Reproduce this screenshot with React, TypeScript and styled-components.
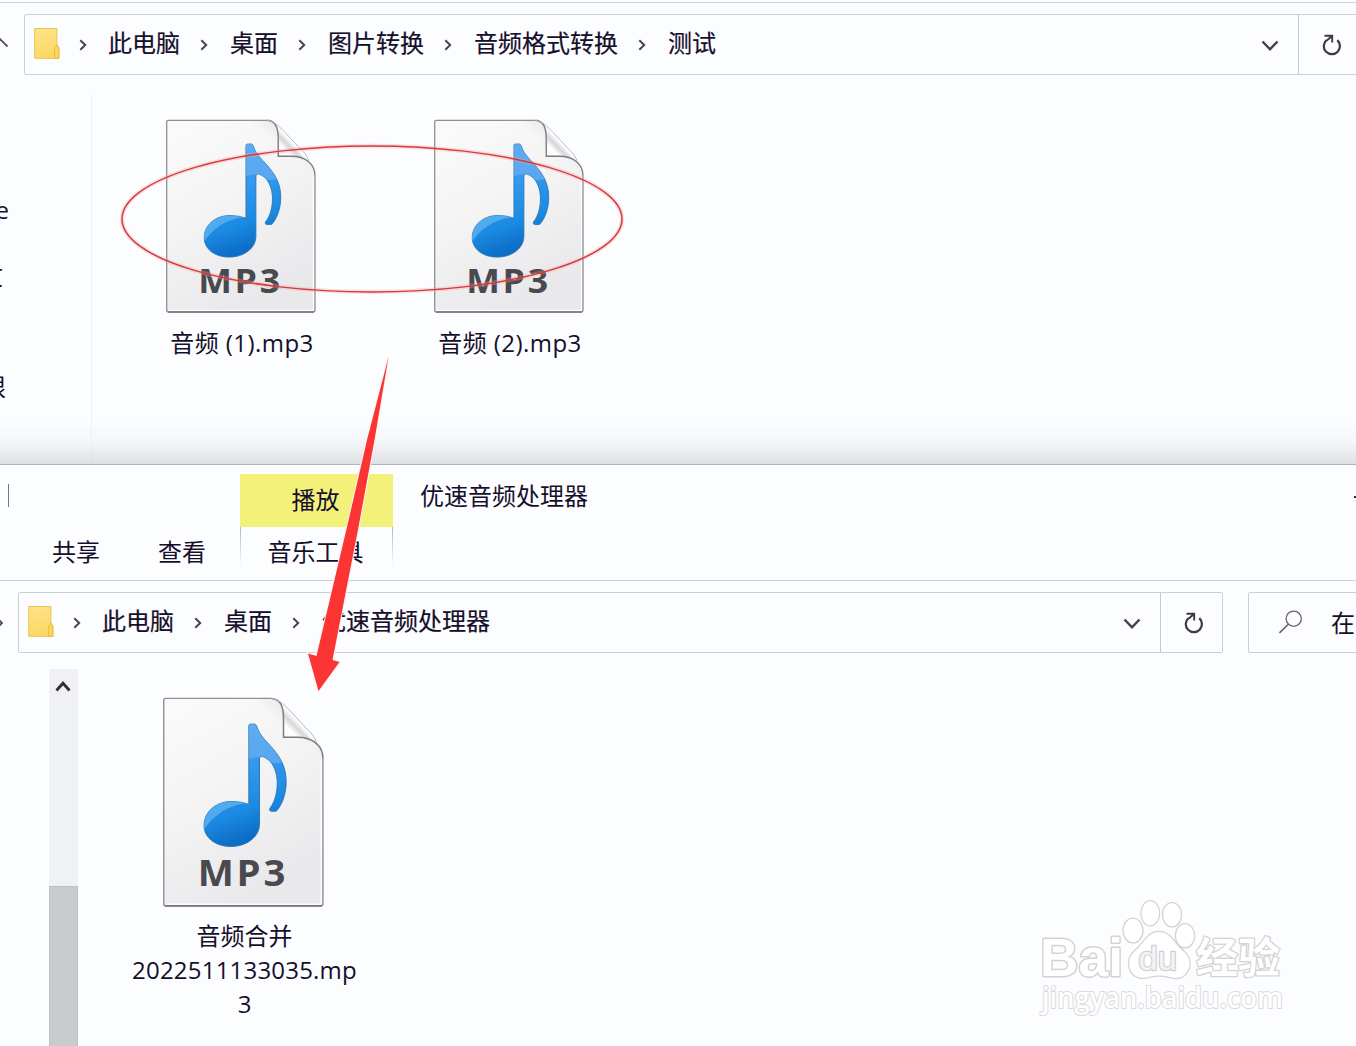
import React from "react";
import styled, { createGlobalStyle } from "styled-components";

const Global = createGlobalStyle`
  * { box-sizing: border-box; }
  html, body { margin: 0; background: #fcfdff; }
  body {
    font-family: "Open Sans", "Noto Sans CJK SC", sans-serif;
    color: #160f2b;
    overflow: hidden;
  }
  svg { display: block; flex: none; }
`;

const Screen = styled.div`
  position: relative;
  width: 1356px;
  height: 1046px;
  overflow: hidden;
  background: #fcfdff;
`;

const UpperWindow = styled.section`
  height: 464px;
  display: flex;
  flex-direction: column;
  background: linear-gradient(#fcfdff 0, #fcfdff 420px, #f5f6f9 442px, #dfe0e4 464px);
`;

const RibbonEdge = styled.div`
  height: 14px;
  flex: none;
  padding-top: 2px;
  &::after { content: ""; display: block; height: 1px; background: #cbd3dc; }
`;

const NavRow = styled.div`
  display: flex;
  height: 61px;
  flex: none;
`;

const NavGutter = styled.div<{ $w: number }>`
  width: ${(p) => p.$w}px;
  flex: none;
  display: flex;
  align-items: center;
`;

const AddressBar = styled.div<{ $w: number }>`
  width: ${(p) => p.$w}px;
  flex: none;
  display: flex;
  border: 1px solid #c9d0d9;
  border-radius: 2px;
`;

const Crumbs = styled.div`
  flex: 1;
  display: flex;
  align-items: center;
  padding-left: 9px;
`;

const Crumb = styled.span`
  font-size: 24px;
  line-height: 34px;
  white-space: nowrap;
  color: #160f2b;
  -webkit-text-stroke: 0.2px #160f2b;
  margin-top: -3px;
`;

const CrumbGap = styled.span<{ $w?: number }>`
  width: ${(p) => p.$w ?? 50}px;
  padding-right: 2px;
  display: flex;
  justify-content: center;
`;

const DropButton = styled.div<{ $w: number }>`
  width: ${(p) => p.$w}px;
  padding-top: 3px;
  display: flex;
  align-items: center;
  justify-content: center;
`;

const RefreshButton = styled.div`
  width: 62px;
  flex: none;
  display: flex;
  align-items: center;
  justify-content: center;
  padding-left: 4px;
  border-left: 1px solid #c3c9d3;
`;

const SearchBox = styled.div`
  width: 150px;
  flex: none;
  margin-left: 25px;
  border: 1px solid #c9d0d9;
  border-radius: 2px;
  display: flex;
  align-items: center;
  padding-left: 30px;
  gap: 28px;
  font-size: 24px;
  line-height: 34px;
`;

const UpperBody = styled.div`
  flex: 1;
  display: flex;
`;

const TreePane = styled.div`
  width: 92px;
  flex: none;
  margin-top: 20px;
  padding-top: 98px;
  border-right: 1px solid rgba(205, 212, 225, 0.25);
`;

const TreeItem = styled.div<{ $w: number; $h: number }>`
  width: ${(p) => p.$w}px;
  height: ${(p) => p.$h}px;
  overflow: hidden;
  display: flex;
  justify-content: flex-end;
  font-size: 24px;
  line-height: 34px;
  white-space: nowrap;
`;

const FileGrid = styled.div<{ $top: number; $left: number }>`
  display: flex;
  align-items: flex-start;
  padding: ${(p) => p.$top}px 0 0 ${(p) => p.$left}px;
`;

const FileItem = styled.figure<{ $w: number }>`
  margin: 0;
  width: ${(p) => p.$w}px;
  display: flex;
  flex-direction: column;
  align-items: center;
`;

const FileName = styled.figcaption<{ $gap: number }>`
  margin-top: ${(p) => p.$gap}px;
  padding-left: 2px;
  font-size: 24px;
  line-height: 34px;
  text-align: center;
  white-space: nowrap;
`;

const NameLine = styled.span<{ $spacing?: number }>`
  display: block;
  letter-spacing: ${(p) => p.$spacing ?? 0}px;
`;

const LowerWindow = styled.section`
  height: 582px;
  display: flex;
  flex-direction: column;
  border-top: 1px solid #b4b5ba;
`;

const Header = styled.div`
  height: 116px;
  flex: none;
  display: flex;
  border-bottom: 1px solid #cbd1da;
  font-size: 24px;
  line-height: 34px;
`;

const MenuSide = styled.div`
  width: 240px;
  display: flex;
  flex-direction: column;
  justify-content: space-between;
  padding: 19px 0 11px 8px;
`;

const Caret = styled.div`
  width: 1px;
  height: 23px;
  background: #77767f;
`;

const MenuTabs = styled.div`
  display: flex;
  gap: 58px;
  padding-left: 44px;
`;

const ContextTab = styled.div`
  width: 153px;
  padding-top: 9px;
  text-align: center;
`;

const ContextTitle = styled.div`
  height: 53px;
  background: #f4f17b;
  padding: 9px 2px 0 0;
`;

const ContextLabel = styled.div`
  height: 39px;
  padding: 8px 2px 0 0;
  background:
    linear-gradient(#b5b6bd, #fcfdff) left / 1px 100% no-repeat,
    linear-gradient(#b5b6bd, #fcfdff) right / 1px 100% no-repeat;
`;

const WindowTitle = styled.div`
  flex: 1;
  padding: 14px 0 0 27px;
`;

const MinimizeEdge = styled.div`
  width: 2px;
  height: 2px;
  margin-top: 31px;
  background: #2b2635;
`;

const LowerNav = styled(NavRow)`
  margin-top: 11px;
`;

const LowerBody = styled.div`
  flex: 1;
  display: flex;
  padding: 16px 0 0 49px;
`;

const ScrollTrack = styled.div`
  width: 29px;
  flex: none;
  display: flex;
  flex-direction: column;
  background: #eff1f4;
  padding-top: 11px;
`;

const ScrollUp = styled.div`
  padding-left: 6px;
`;

const ScrollThumb = styled.div`
  width: 29px;
  flex: 1;
  margin-top: 194px;
  background: #cacbcf;
  border: solid #bebfc4;
  border-width: 1px 1px 0;
`;

const Overlay = styled.svg`
  position: absolute;
  left: 0;
  top: 0;
  pointer-events: none;
`;

function Folder() {
  return (
    <svg width="26" height="36" viewBox="0 0 26 36">
      <defs>
        <linearGradient id="folder" x1="0" y1="0" x2="0.3" y2="1">
          <stop offset="0" stopColor="#ffe38d" />
          <stop offset="1" stopColor="#fbd864" />
        </linearGradient>
      </defs>
      <path d="M.7 1.500h22.200V18l2 3v10.300H.7z" fill="url(#folder)" stroke="#e9c552" />
      <path d="M23 18c-1.600 2.500-2.600 4-2.600 6.500V31.300h4.500V21z" fill="#f9d660" stroke="#e5b93b" strokeWidth="0.900" />
    </svg>
  );
}

function Chevron() {
  return (
    <svg width="8" height="12" viewBox="0 0 8 12">
      <path d="M1.300 1.200 6.200 6 1.300 10.800" fill="none" stroke="#4b4353" strokeWidth="2" />
    </svg>
  );
}

function DownChevron() {
  return (
    <svg width="18" height="12" viewBox="0 0 18 12">
      <path d="M1.500 1.500 9 9.300l7.500-7.800" fill="none" stroke="#463f4c" strokeWidth="2.500" />
    </svg>
  );
}

function Refresh() {
  return (
    <svg width="20" height="22" viewBox="0 0 20 22">
      <path d="M4.300 6.200A8.100 8.100 0 1 0 15.300 6.100" fill="none" stroke="#413748" strokeWidth="2.200" />
      <path d="M2.500 1.800h7.700V8.600M10 2 4.200 7" fill="none" stroke="#413748" strokeWidth="1.900" />
    </svg>
  );
}

function Magnifier() {
  return (
    <svg width="24" height="26" viewBox="0 0 24 26">
      <g fill="none" stroke="#69616f">
        <circle cx="14.700" cy="8.700" r="7.600" strokeWidth="1.300" />
        <path d="M9.300 14.200.5 23" strokeWidth="1.600" />
      </g>
    </svg>
  );
}

function Mp3Icon({ id, w, h }: { id: string; w: number; h: number }) {
  const note =
    "M80.500 25.500Q80.500 24 82 24H86Q87.500 24 88.500 27.500C92.500 41 115.500 50 115.500 77C115.500 88 112 97.500 107 103.500Q106.500 104.300 105.500 104.300H102Q99 104.300 100.300 101.500C110 90 111 59 93 53.800Q90.500 53.300 90.500 56V116C90.500 128 78.500 136.800 63.500 136.800C49 136.800 38.500 128.500 38.500 117.500C38.500 105 49.500 95.300 64.500 95.300Q73.500 95.300 80.500 98z";
  return (
    <svg width={w} height={h} viewBox="0 -0.6 151 193.600" preserveAspectRatio="none">
      <defs>
        <linearGradient id={`${id}-paper`} x1="0" y1="0" x2="0.450" y2="1">
          <stop offset="0" stopColor="#fbfbfc" />
          <stop offset="0.500" stopColor="#f4f4f5" />
          <stop offset="1" stopColor="#e9e9eb" />
        </linearGradient>
        <linearGradient id={`${id}-note`} x1="0" y1="0" x2="0.250" y2="1">
          <stop offset="0" stopColor="#4ea2ed" />
          <stop offset="0.450" stopColor="#3399ee" />
          <stop offset="0.780" stopColor="#1b8ae2" />
          <stop offset="1" stopColor="#0c6dc6" />
        </linearGradient>
        <linearGradient id={`${id}-shade`} x1="1" y1="0" x2="0.300" y2="0.800">
          <stop offset="0.200" stopColor="#a8a8ab" stopOpacity="0.750" />
          <stop offset="0.620" stopColor="#d5d5d8" stopOpacity="0" />
        </linearGradient>
        <linearGradient id={`${id}-curl`} x1="0" y1="1" x2="1" y2="0">
          <stop offset="0" stopColor="#ededee" />
          <stop offset="0.340" stopColor="#ffffff" />
          <stop offset="0.450" stopColor="#d6d6d9" />
          <stop offset="0.540" stopColor="#fafafa" />
        </linearGradient>
        <clipPath id={`${id}-clip`}><path d={note} /></clipPath>
      </defs>
      <path
        d="M2.500.7H102C111 1.500 113 9 113 20V36.500H129C141 36.500 150 43 150 56V190Q150 192 148 192H2.500Q.7 192 .7 190V2.500Q.7.700 2.500.7z"
        fill={`url(#${id}-paper)`}
      />
      <path d="M80 1H102C111 1.500 113 9 113 20V36.500H129C141 36.500 149 43 149.500 56V64L88 46z" fill={`url(#${id}-shade)`} opacity="0.550" />
      <path
        d="M102 .7H2.500Q.7.700.7 2.500V190Q.7 192 2.500 192H148Q150 192 150 190V56"
        fill="none" stroke="#8e8f94" strokeWidth="1.300"
      />
      <path d="M2.200 190.300H148.400V58" fill="none" stroke="#fff" strokeWidth="1.200" />
      <path d="M2 192H149" stroke="#77787d" strokeWidth="1.500" />
      <path d="M102 .7C111 3 120 15 136 34L139 38Q131 36 113 36.500V20C113 9 111 2 102 .7z" fill={`url(#${id}-curl)`} />
      <path d="M102 .7C111 1.500 113 9 113 20V36.500H126C140 36.500 150 44 150 56" fill="none" stroke="#7b7b80" strokeWidth="1.400" />
      <path d="M102 .7C110 2 115 8 121 14L136 30C140 33 142 37 144 41" fill="none" stroke="#b2b3b8" strokeWidth="0.900" />
      <g transform="translate(0 0.400)">
        <path d={note} fill={`url(#${id}-note)`} stroke="#2c75b6" strokeWidth="0.900" />
        <g clipPath={`url(#${id}-clip)`}>
          <path d="M78 20H118V57Q101 64 89 54Q84 55 78 57z" fill="#72b3f4" opacity="0.600" />
          <path d="M36 126C43 111 60 98 80 97V90H36z" fill="#70c0f8" opacity="0.600" />
        </g>
      </g>
      <text x="32.500" y="173.500" textLength="85" lengthAdjust="spacingAndGlyphs" letterSpacing="2.500" fontFamily="Open Sans, sans-serif" fontWeight="700" fontSize="33.500" fill="#4a494f">
        MP3
      </text>
    </svg>
  );
}

function Trail({ items }: { items: string[] }) {
  return (
    <Crumbs>
      <Folder />
      <CrumbGap $w={48}><Chevron /></CrumbGap>
      {items.map((name, i) => (
        <React.Fragment key={name}>
          {i > 0 && <CrumbGap><Chevron /></CrumbGap>}
          <Crumb>{name}</Crumb>
        </React.Fragment>
      ))}
    </Crumbs>
  );
}

function Annotations() {
  return (
    <Overlay width="1356" height="1046" viewBox="0 0 1356 1046">
      <ellipse cx="372" cy="219" rx="250" ry="73" fill="none" stroke="#ff9d9d" strokeOpacity="0.300" strokeWidth="4.500" />
      <ellipse cx="372" cy="219" rx="250" ry="73" fill="none" stroke="#d23c3f" strokeWidth="1.500" />
      <path
        d="M388.500 357 374.500 440 358.500 527 332.500 660 339.500 662 318.500 691 308 653.500 316.500 656 347 527 367 440z"
        fill="#fb3434" stroke="#fff3f3" strokeWidth="2" paintOrder="stroke"
      />
    </Overlay>
  );
}

function Watermark() {
  return (
    <Overlay width="1356" height="1046" viewBox="0 0 1356 1046">
      <g fill="#fff" stroke="#d3d3d6" strokeWidth="2.600" paintOrder="stroke" strokeLinejoin="round">
        <ellipse cx="1133" cy="930.500" rx="9.300" ry="11.800" />
        <ellipse cx="1150.300" cy="913.300" rx="8.700" ry="12" />
        <ellipse cx="1172" cy="914.700" rx="9" ry="11.500" />
        <ellipse cx="1185" cy="935.700" rx="9" ry="11.500" />
        <path d="M1159 932C1170 932 1174 943 1182 950C1190 957 1191 963 1188 970C1184 979 1176 979 1168 976.500Q1159 974.500 1150 976.500C1142 979 1134 978 1130.500 970C1127 961 1130 956 1137 949C1145 942 1148 932 1159 932z" />
        <g fontWeight="700">
          <text x="1040" y="975.500" fontSize="54" textLength="83" lengthAdjust="spacingAndGlyphs" fontFamily="Liberation Sans, sans-serif" strokeWidth="3">Bai</text>
          <text x="1138.500" y="969.500" fontSize="33" textLength="38.500" lengthAdjust="spacingAndGlyphs" fontFamily="Liberation Sans, sans-serif" fontWeight="400" fill="#f4f4f6" stroke="#cfcfd3" strokeWidth="2.400">du</text>
          <text x="1196" y="973" fontSize="42" fontFamily="Noto Sans CJK SC, sans-serif">经验</text>
        </g>
        <text x="1042" y="1008" fontSize="28" textLength="241" lengthAdjust="spacingAndGlyphs" fontFamily="Open Sans, sans-serif" fontWeight="600" stroke="#dadadd" strokeWidth="2">jingyan.baidu.com</text>
      </g>
    </Overlay>
  );
}

export default function App() {
  return (
    <>
      <Global />
      <Screen>
        <UpperWindow>
          <RibbonEdge />
          <NavRow>
            <NavGutter $w={24}>
              <svg width="9" height="14" viewBox="0 0 9 14"><path d="M-1 0 7.500 8.500" stroke="#5b535f" strokeWidth="1.800" /></svg>
            </NavGutter>
            <AddressBar $w={1337}>
              <Trail items={["此电脑", "桌面", "图片转换", "音频格式转换", "测试"]} />
              <DropButton $w={57}><DownChevron /></DropButton>
              <RefreshButton><Refresh /></RefreshButton>
            </AddressBar>
          </NavRow>
          <UpperBody>
            <TreePane>
              <TreeItem $w={9} $h={66}>e</TreeItem>
              <TreeItem $w={3} $h={111}>文</TreeItem>
              <TreeItem $w={6} $h={40}>限</TreeItem>
            </TreePane>
            <FileGrid $top={44} $left={15}>
              <FileItem $w={268}>
                <Mp3Icon id="a" w={150} h={194} />
                <FileName $gap={13}><NameLine $spacing={0.45}>音频 (1).mp3</NameLine></FileName>
              </FileItem>
              <FileItem $w={268}>
                <Mp3Icon id="b" w={150} h={194} />
                <FileName $gap={13}><NameLine $spacing={0.45}>音频 (2).mp3</NameLine></FileName>
              </FileItem>
            </FileGrid>
          </UpperBody>
        </UpperWindow>

        <LowerWindow>
          <Header>
            <MenuSide>
              <Caret />
              <MenuTabs><span>共享</span><span>查看</span></MenuTabs>
            </MenuSide>
            <ContextTab>
              <ContextTitle>播放</ContextTitle>
              <ContextLabel>音乐工具</ContextLabel>
            </ContextTab>
            <WindowTitle>优速音频处理器</WindowTitle>
            <MinimizeEdge />
          </Header>
          <LowerNav>
            <NavGutter $w={18}>
              <svg width="4" height="8" viewBox="0 0 4 8"><path d="M-2 0 2 4-2 8" fill="none" stroke="#4b4353" strokeWidth="1.800" /></svg>
            </NavGutter>
            <AddressBar $w={1205}>
              <Trail items={["此电脑", "桌面", "优速音频处理器"]} />
              <DropButton $w={57}><DownChevron /></DropButton>
              <RefreshButton><Refresh /></RefreshButton>
            </AddressBar>
            <SearchBox><Magnifier />在</SearchBox>
          </LowerNav>
          <LowerBody>
            <ScrollTrack>
              <ScrollUp>
                <svg width="16" height="12" viewBox="0 0 16 12"><path d="M1.500 10.500 8 3.200l6.500 7.300" fill="none" stroke="#332b3a" strokeWidth="2.800" /></svg>
              </ScrollUp>
              <ScrollThumb />
            </ScrollTrack>
            <FileGrid $top={28} $left={36}>
              <FileItem $w={259}>
                <Mp3Icon id="c" w={161} h={210} />
                <FileName $gap={12}>
                  <NameLine>音频合并</NameLine>
                  <NameLine $spacing={0.2}>2022511133035.mp</NameLine>
                  <NameLine>3</NameLine>
                </FileName>
              </FileItem>
            </FileGrid>
          </LowerBody>
        </LowerWindow>
        <Annotations />
        <Watermark />
      </Screen>
    </>
  );
}
